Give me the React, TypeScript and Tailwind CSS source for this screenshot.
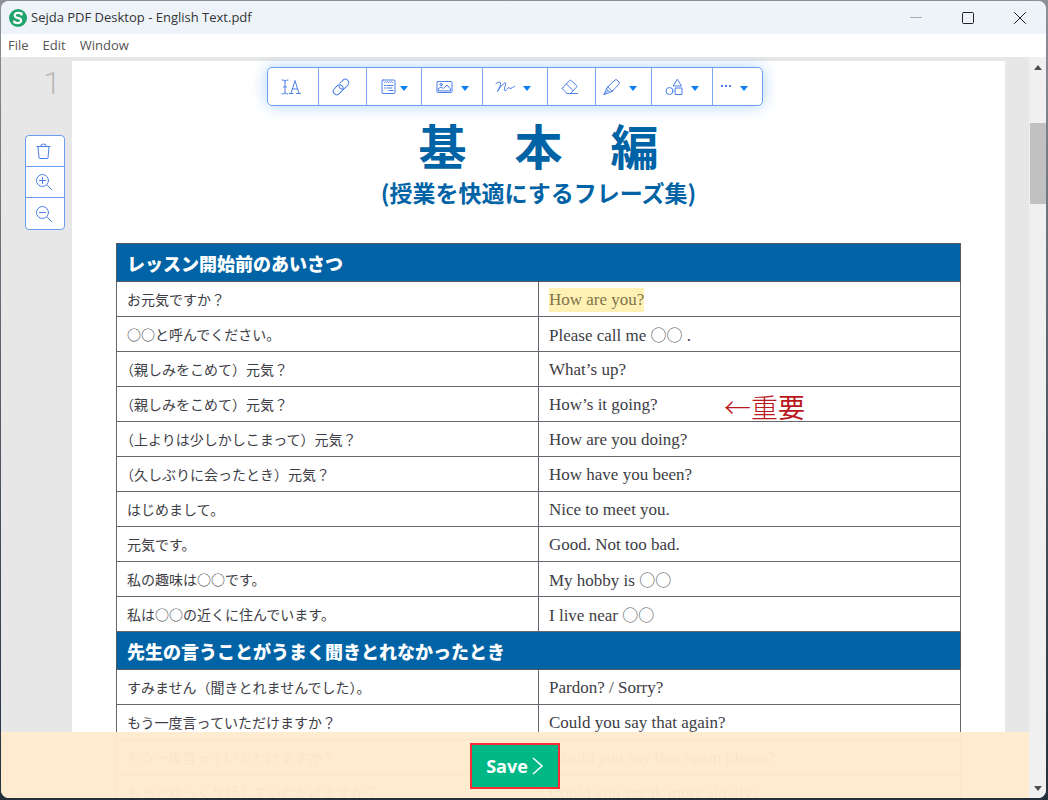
import type { ReactNode } from 'react'

type Row = { ja: string; en: string; marked?: boolean; note?: boolean }

const sections: { title: string; rows: Row[] }[] = [
  {
    title: 'レッスン開始前のあいさつ',
    rows: [
      { ja: 'お元気ですか？', en: 'How are you?', marked: true },
      { ja: '○○と呼んでください。', en: 'Please call me ○○ .' },
      { ja: '（親しみをこめて）元気？', en: 'What’s up?' },
      { ja: '（親しみをこめて）元気？', en: 'How’s it going?', note: true },
      { ja: '（上よりは少しかしこまって）元気？', en: 'How are you doing?' },
      { ja: '（久しぶりに会ったとき）元気？', en: 'How have you been?' },
      { ja: 'はじめまして。', en: 'Nice to meet you.' },
      { ja: '元気です。', en: 'Good. Not too bad.' },
      { ja: '私の趣味は○○です。', en: 'My hobby is ○○' },
      { ja: '私は○○の近くに住んでいます。', en: 'I live near ○○' },
    ],
  },
  {
    title: '先生の言うことがうまく聞きとれなかったとき',
    rows: [
      { ja: 'すみません（聞きとれませんでした）。', en: 'Pardon? / Sorry?' },
      { ja: 'もう一度言っていただけますか？', en: 'Could you say that again?' },
      { ja: 'もう一度言っていただけますか？', en: 'Would you say that again please?' },
      { ja: 'もっとゆっくり話していただけますか？', en: 'Could you speak more slowly?' },
    ],
  },
]

function Icon({ children, w = 18, h = 18 }: { children: ReactNode; w?: number; h?: number }) {
  return (
    <svg width={w} height={h} viewBox={`0 0 ${w} ${h}`} fill="none" stroke="currentColor"
      strokeLinecap="round" strokeLinejoin="round" aria-hidden="true">
      {children}
    </svg>
  )
}

function Caret() {
  return (
    <svg width="8" height="5" viewBox="0 0 8 5" fill="#0d7ff2" className="mt-1" aria-hidden="true">
      <path d="M0 0h8L4 5z" />
    </svg>
  )
}

const tools = [
  {
    label: 'Text', width: 'w-[51px]', menu: false, gap: 'pr-1',
    icon: (
      <Icon w={20}>
        <path d="M1 2q2 0 3 1q1-1 3-1M4 3v12M1 16q2 0 3-1q1 1 3 1M2.500 9h3" />
        <path d="M8.500 15.500h3.500M15.500 15.500h4M10 15.500l4-13l4 13M11.500 11h5" />
      </Icon>
    ),
  },
  {
    label: 'Links', width: 'w-12', menu: false, gap: 'pr-1',
    icon: (
      <Icon>
        <g transform="rotate(-45 9 9)">
          <rect x="-.5" y="5.500" width="11" height="7" rx="3.500" />
          <path d="M10.800 5.500H15a3.500 3.500 0 0 1 0 7h-4a3.500 3.500 0 0 1-3.500-3.500q0-1.500 1-2.500" />
        </g>
      </Icon>
    ),
  },
  {
    label: 'Forms', width: 'w-[55px]', menu: true, gap: 'gap-1',
    icon: (
      <Icon w={15} h={16}>
        <rect x="1" y="1" width="13" height="13.500" rx="1" />
        <path d="M3.500 3.500l1-1 1 1 1-1 1 1 1-1 1 1 1-1 1 1M3.500 6.500h1M6 6.500h6M3.500 9h1M6 9h5M8 11.500h4" />
      </Icon>
    ),
  },
  {
    label: 'Images', width: 'w-[61px]', menu: true, gap: 'gap-2',
    icon: (
      <Icon w={17} h={14}>
        <rect x="1" y="1.500" width="15" height="11" rx="1" />
        <circle cx="5" cy="4.500" r="1.200" />
        <path d="M2.500 10.500V8.500L5 7l2.500 1.500L11 5l3.500 4v1.500z" />
      </Icon>
    ),
  },
  {
    label: 'Sign', width: 'w-[65px]', menu: true, gap: 'gap-2 pr-1',
    icon: (
      <Icon w={20} h={14}>
        <path d="M1 3.500Q5 1 5.500 3T2.500 11.500Q6 5 10 2.500q1.500.5 0 4t0 4.500Q12 9.500 13 8t1 0q1 1.500 5.500-1.500" />
      </Icon>
    ),
  },
  {
    label: 'Whiteout', width: 'w-12', menu: false, gap: 'pr-1',
    icon: (
      <Icon>
        <path d="M1.500 10L8.500 2.500q.8-.7 1.600 0L15.500 7.500q.7.800 0 1.600L9.500 15.500H6L1.500 11q-.5-.5 0-1zM5.500 6l6.500 6.500M6 15.500h10.500" />
      </Icon>
    ),
  },
  {
    label: 'Annotate', width: 'w-14', menu: true, gap: 'gap-2 pr-2',
    icon: (
      <Icon>
        <path d="M5 8.500l7-6.500q1-.8 2 0l2 2q.8 1 0 2l-6.500 7zM5 8.500L3.500 11l-2.500 5.500 5.500-2 3-1.500M3.500 11l3.500 3.500M1 16.500l4-4" />
      </Icon>
    ),
  },
  {
    label: 'Shapes', width: 'w-[61px]', menu: true, gap: 'gap-2',
    icon: (
      <Icon>
        <path d="M12.500 1.500L16.500 8h-8z" />
        <circle cx="4.500" cy="13" r="3.500" />
        <rect x="10.500" y="10" width="6.500" height="6.500" />
      </Icon>
    ),
  },
  {
    label: 'More', width: 'w-[49px]', menu: true, gap: 'gap-2 pr-2',
    icon: (
      <svg width="12" height="10" viewBox="0 0 12 10" fill="currentColor" aria-hidden="true">
        <path d="M1 3h2v2H1zM5 3h2v2H5zM9 3h2v2H9z" />
      </svg>
    ),
  },
]

const pageActions = [
  {
    label: 'Delete page',
    icon: <path d="M2 4.500h13M5.500 4.500q0-2.500 3-2.500t3 2.500M3 4.500l1 11.500q0 .5.700.5h7.600q.7 0 .7-.5l1-11.500" />,
  },
  {
    label: 'Zoom in',
    icon: <><circle cx="7.500" cy="7.500" r="6" /><path d="M12 12l5 5M4.500 7.500h6M7.500 4.500v6" /></>,
  },
  {
    label: 'Zoom out',
    icon: <><circle cx="7.500" cy="7.500" r="6" /><path d="M12 12l5 5M4.500 7.500h6" /></>,
  },
]

function TitleBar() {
  return (
    <header className="flex h-[33px] shrink-0 items-center bg-[#eef3fa] pl-2">
      <svg width="18" height="18" viewBox="0 0 18 18" aria-hidden="true">
        <circle cx="9" cy="9" r="9" fill="#20a36c" />
        <path d="M12.500 6.500V4.500Q9 3.200 6.800 4.300Q4.500 6.300 6.800 8.200L11 9.700Q13.300 11.700 11 13.500Q8.500 14.700 5.300 13.300V11.500"
          fill="none" stroke="#fff" strokeWidth="2.200" />
      </svg>
      <h1 className="ml-1 flex-1 text-[13px] text-[#333]">Sejda PDF Desktop - English Text.pdf</h1>
      <button aria-label="Minimize" className="flex h-full w-[52px] items-center justify-center text-[#aaa]">
        <Icon w={12} h={12}><path d="M.5 5.500h11" /></Icon>
      </button>
      <button aria-label="Maximize" className="flex h-full w-[52px] items-center justify-center text-[#222]">
        <Icon w={12} h={12}><rect x=".5" y=".5" width="11" height="11" rx="1" /></Icon>
      </button>
      <button aria-label="Close" className="flex h-full w-[52px] items-center justify-center text-[#222]">
        <Icon w={12} h={12}><path d="M.5.5l11 11M11.500.5l-11 11" /></Icon>
      </button>
    </header>
  )
}

function Toolbar() {
  return (
    <div className="absolute left-1/2 top-[10px] z-10 flex h-[39px] -translate-x-1/2 divide-x divide-[#7ba7f0] rounded-[5px] border border-[#6a9eef] bg-white text-[#4b7fe8] shadow-[0_0_16px_rgba(60,150,240,0.4)]">
      {tools.map(tool => (
        <button key={tool.label} aria-label={tool.label}
          className={`flex items-center justify-center ${tool.width} ${tool.gap}`}>
          {tool.icon}
          {tool.menu && <Caret />}
        </button>
      ))}
    </div>
  )
}

// The blank circles are set in the Japanese face, the rest in the serif
function Phrase({ text }: { text: string }) {
  const [before, after] = text.split('○○')
  if (after === undefined) return <>{text}</>
  return (
    <>
      {before}
      <span className="font-['Noto_Sans_CJK_JP',sans-serif] text-base/6 font-light">○○</span>
      {after}
    </>
  )
}

function PhraseTable() {
  return (
    <table className="mx-11 mt-[35px] w-[calc(100%-88px)] table-fixed border-collapse text-left text-[#3d3d45]">
      {sections.map(section => (
        <tbody key={section.title}>
          <tr className="h-[38px]">
            <th colSpan={2} className="border border-[#55585f] bg-[#0063a6] px-[10px] text-lg/6 font-black text-white">
              {section.title}
            </th>
          </tr>
          {section.rows.map((row, i) => (
            <tr key={i} className="h-[35px]">
              <td className="border border-[#66676f] px-[10px] text-sm/6 [text-spacing-trim:trim-start]">{row.ja}</td>
              <td className="relative border border-[#66676f] px-[10px] pt-0.5 font-['Liberation_Serif','Noto_Sans_CJK_JP',serif] text-[17px]/6">
                {row.marked
                  ? <mark className="inline-block bg-[#fff0b4] text-[#80744a]">{row.en}</mark>
                  : <Phrase text={row.en} />}
                {row.note && (
                  <span className="absolute left-[185px] top-0 font-['Noto_Sans_CJK_JP',sans-serif] text-[27px]/10 font-light text-[#b9181c]">
                    ←重<b>要</b>
                  </span>
                )}
              </td>
            </tr>
          ))}
        </tbody>
      ))}
    </table>
  )
}

function Scrollbar() {
  return (
    <div className="flex w-[17px] shrink-0 flex-col items-center bg-[#f0f0f0] pl-px">
      <button aria-label="Scroll up" className="flex h-5 w-full items-center justify-center">
        <svg width="8" height="5" viewBox="0 0 8 5" fill="#505050" aria-hidden="true"><path d="M4 0l4 5H0z" /></svg>
      </button>
      <div className="mt-[46px] h-[81px] w-full bg-[#c1c1c1]" />
      <button aria-label="Scroll down" className="mt-auto flex h-5 w-full items-center justify-center">
        <svg width="8" height="5" viewBox="0 0 8 5" fill="#505050" aria-hidden="true"><path d="M0 0h8L4 5z" /></svg>
      </button>
    </div>
  )
}

export default function App() {
  return (
    <div className="h-screen bg-linear-to-b from-[#8d9096] to-[#23303c] pt-px pr-0.5 pb-0.5 pl-px font-['Open_Sans','Noto_Sans_CJK_JP',sans-serif]">
      <div className="flex h-full flex-col overflow-hidden rounded-lg bg-[#e7e7e7]">
        <TitleBar />
        <nav className="flex h-[23px] shrink-0 items-center gap-[14px] bg-white pl-[7px] pt-px text-[13px] text-[#555]">
          <button>File</button>
          <button>Edit</button>
          <button>Window</button>
        </nav>

        <div className="flex min-h-0 flex-1">
          <main className="relative flex flex-1 items-start overflow-hidden pt-1">
            <aside className="flex w-[71px] shrink-0 flex-col items-end pr-[7px]">
              <span className="mr-1 mt-1 font-[Roboto,sans-serif] text-[32px]/9 font-light text-[#bbb]">1</span>
              <div className="mt-[34px] flex flex-col divide-y divide-[#6a9eef] rounded-sm border border-[#6a9eef] bg-white text-[#4b7fe8]">
                {pageActions.map(action => (
                  <button key={action.label} aria-label={action.label} className="flex h-[31px] w-[38px] items-center justify-center pr-0.5">
                    <Icon>{action.icon}</Icon>
                  </button>
                ))}
              </div>
            </aside>

            <article className="flex-1 bg-white pt-[51px] font-['Noto_Sans_CJK_JP',sans-serif]">
              <h2 className="text-center text-5xl/16 font-bold text-[#0063a6]">基　本　編</h2>
              <p className="text-center text-[23px]/8 font-bold text-[#0063a6]">(授業を快適にするフレーズ集)</p>
              <PhraseTable />
            </article>
            <div className="w-6 shrink-0" />

            <Toolbar />
            <footer className="absolute inset-x-0 bottom-0 flex h-[66px] items-center justify-center bg-[#ffeacd]/97 pt-0.5">
              <button className="flex h-[46px] w-[90px] items-center justify-center gap-1 border-2 border-red-500 bg-[#00b886] text-lg font-bold text-white">
                Save
                <svg width="12" height="18" viewBox="0 0 12 18" fill="none" stroke="currentColor" strokeWidth="1.500" aria-hidden="true">
                  <path d="M1 1l9 8-9 8" />
                </svg>
              </button>
            </footer>
          </main>
          <Scrollbar />
        </div>
      </div>
    </div>
  )
}
